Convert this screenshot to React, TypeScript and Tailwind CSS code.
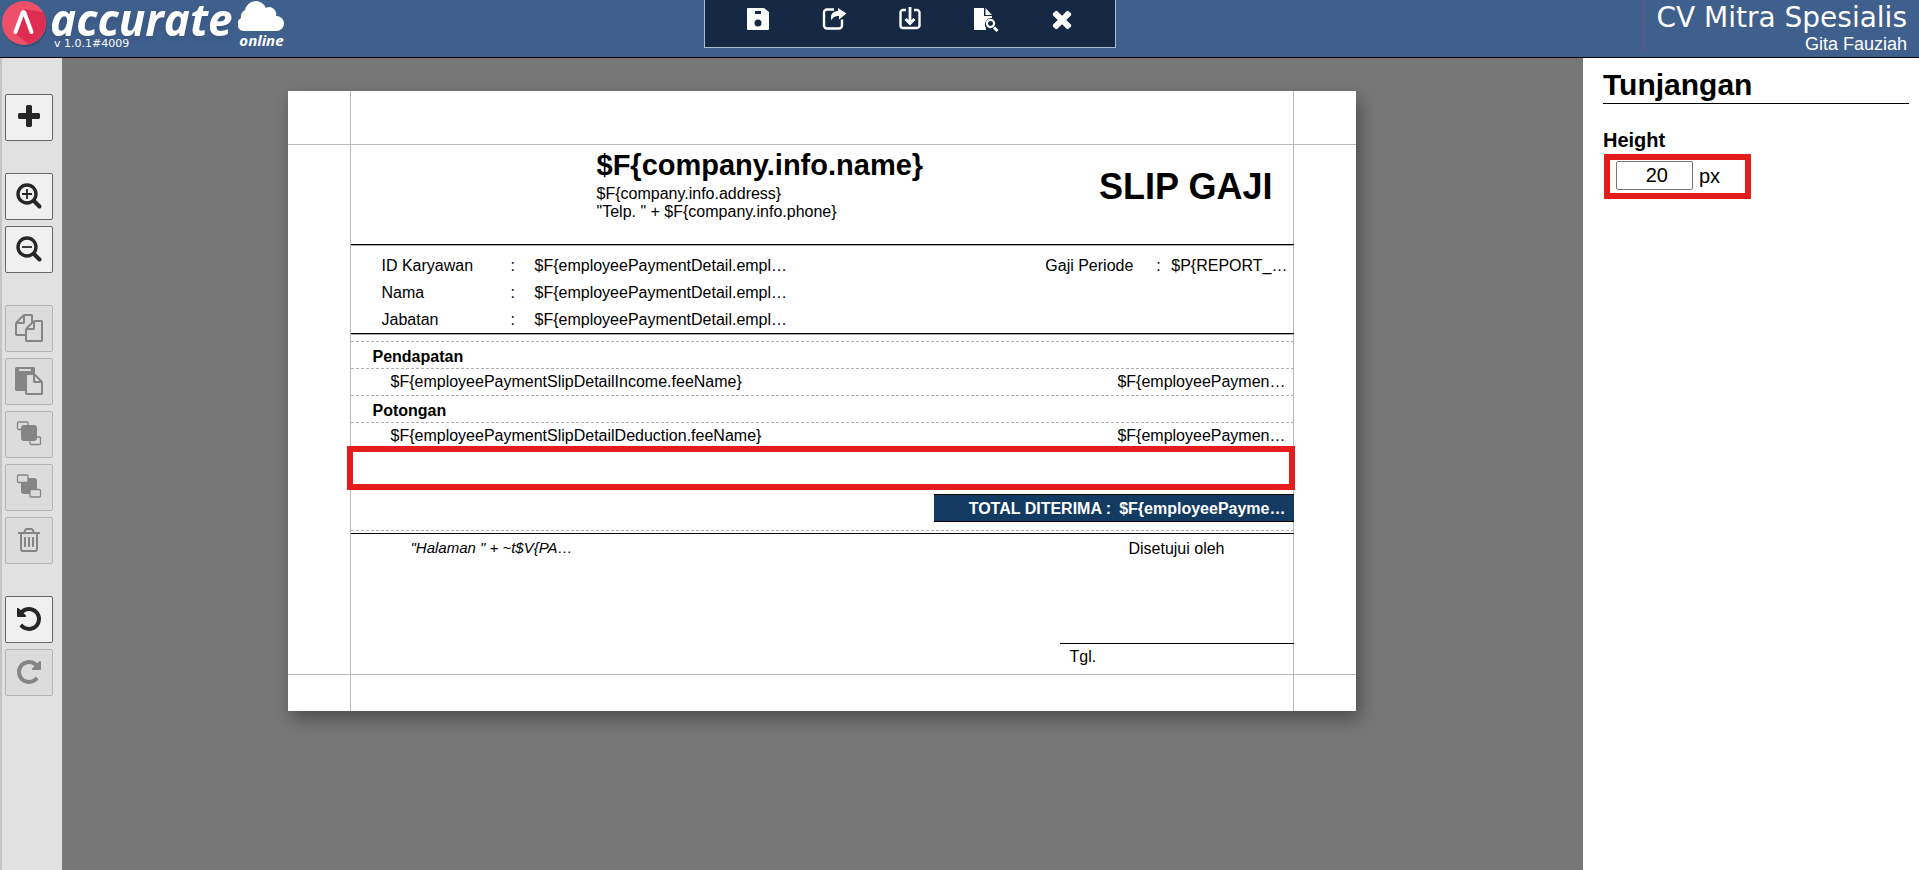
import type { ReactNode } from 'react'

const icons = {
  plus: 'M1600 736v192q0 40-28 68t-68 28h-416v416q0 40-28 68t-68 28h-192q-40 0-68-28t-28-68v-416h-416q-40 0-68-28t-28-68v-192q0-40 28-68t68-28h416v-416q0-40 28-68t68-28h192q40 0 68 28t28 68v416h416q40 0 68 28t28 68z',
  copy: 'M1696 384q40 0 68 28t28 68v1216q0 40-28 68t-68 28h-960q-40 0-68-28t-28-68v-288h-544q-40 0-68-28t-28-68v-672q0-40 20-88t48-76l408-408q28-28 76-48t88-20h416q40 0 68 28t28 68v328q68-40 128-40h416zm-544 213l-299 299h299v-299zm-640-384l-299 299h299v-299zm196 647l316-316v-416h-384v416q0 40-28 68t-68 28h-416v640h512v-256q0-40 20-88t48-76zm956 804v-1152h-384v416q0 40-28 68t-68 28h-416v640h896z',
  paste:
    'M768 1664h896v-640h-416q-40 0-68-28t-28-68v-416h-384v1152zm256-1440v-64q0-13-9.5-22.5t-22.5-9.5h-704q-13 0-22.5 9.5t-9.5 22.5v64q0 13 9.5 22.5t22.5 9.5h704q13 0 22.5-9.5t9.5-22.5zm256 672h299l-299-299v299zm512 128v672q0 40-28 68t-68 28h-960q-40 0-68-28t-28-68v-160h-544q-40 0-68-28t-28-68v-1344q0-40 28-68t68-28h1088q40 0 68 28t28 68v328q21 13 36 28l408 408q28 28 48 76t20 88z',
  trash:
    'M704 736v576q0 14-9 23t-23 9h-64q-14 0-23-9t-9-23v-576q0-14 9-23t23-9h64q14 0 23 9t9 23zm256 0v576q0 14-9 23t-23 9h-64q-14 0-23-9t-9-23v-576q0-14 9-23t23-9h64q14 0 23 9t9 23zm256 0v576q0 14-9 23t-23 9h-64q-14 0-23-9t-9-23v-576q0-14 9-23t23-9h64q14 0 23 9t9 23zm128 724v-948h-896v948q0 22 7 40.5t14.5 27 10.5 8.5h832q3 0 10.5-8.5t14.5-27 7-40.5zm-672-1076h448l-48-117q-7-9-17-11h-317q-10 2-17 11zm928 32v64q0 14-9 23t-23 9h-96v948q0 83-47 143.5t-113 60.5h-832q-66 0-113-58.5t-47-141.5v-952h-96q-14 0-23-9t-9-23v-64q0-14 9-23t23-9h309l70-167q15-37 54-63t79-26h320q40 0 79 26t54 63l70 167h309q14 0 23 9t9 23z',
  undo: 'M1664 896q0 156-61 298t-164 245-245 164-298 61q-172 0-327-72.5t-264-204.5q-7-10-6.5-22.5t8.5-20.5l137-138q10-9 25-9 16 2 23 12 73 95 179 147t225 52q104 0 198.5-40.5t163.5-109.5 109.5-163.5 40.5-198.5-40.5-198.5-109.5-163.5-163.5-109.5-198.5-40.5q-98 0-188 35.5t-160 101.5l137 138q31 30 14 69-17 40-59 40h-448q-26 0-45-19t-19-45v-448q0-42 40-59 39-17 69 14l130 129q107-101 244.5-156.5t284.5-55.5q156 0 298 61t245 164 164 245 61 298z',
  redo: 'M1664 256v448q0 26-19 45t-45 19h-448q-42 0-59-40-17-39 14-69l138-138q-148-137-349-137-104 0-198.5 40.5t-163.5 109.5-109.5 163.5-40.5 198.5 40.5 198.5 109.5 163.5 163.5 109.5 198.5 40.5q119 0 225-52t179-147q7-10 23-12 15 0 25 9l137 138q9 8 9.5 20.5t-7.5 22.5q-109 132-264 204.5t-327 72.5q-156 0-298-61t-245-164-164-245-61-298 61-298 164-245 245-164 298-61q147 0 284.5 55.5t244.5 156.5l130-129q29-31 70-14 39 17 39 59z',
  close:
    'M1490 1322q0 40-28 68l-136 136q-28 28-68 28t-68-28l-294-294-294 294q-28 28-68 28t-68-28l-136-136q-28-28-28-68t28-68l294-294-294-294q-28-28-28-68t28-68l136-136q28-28 68-28t68 28l294 294 294-294q28-28 68-28t68 28l136 136q28 28 28 68t-28 68l-294 294 294 294q28 28 28 68z',
}

function Glyph({ name }: { name: keyof typeof icons }) {
  return (
    <svg viewBox="0 0 1792 1792" className="size-7" fill="currentColor">
      <path d={icons[name]} />
    </svg>
  )
}

function Drawing({ children }: { children: ReactNode }) {
  return (
    <svg viewBox="0 0 28 28" className="size-7" fill="none" stroke="currentColor">
      {children}
    </svg>
  )
}

function ZoomGlyph({ plus }: { plus?: boolean }) {
  return (
    <Drawing>
      <circle cx="12" cy="12" r="9" strokeWidth="3.4" />
      <path d="M19 19l5.500 5.500" strokeWidth="4" strokeLinecap="round" />
      <path d={plus ? 'M7 12h10M12 7v10' : 'M7 12h10'} strokeWidth="1.8" />
    </Drawing>
  )
}

const topTools = [
  {
    label: 'Simpan',
    icon: (
      <Drawing>
        <path
          d="M4 3h16l5 4v17a1 1 0 0 1-1 1H4a1 1 0 0 1-1-1V4a1 1 0 0 1 1-1zm7 3v3h6V6zm3 8.500a3.500 3.500 0 1 0 0 7 3.500 3.500 0 0 0 0-7z"
          fill="currentColor"
          fillRule="evenodd"
          stroke="none"
        />
      </Drawing>
    ),
  },
  {
    label: 'Ekspor',
    icon: (
      <Drawing>
        <path
          d="M14 4.500H7a3 3 0 0 0-3 3v13a3 3 0 0 0 3 3h12a3 3 0 0 0 3-3v-6"
          strokeWidth="2.400"
        />
        <path
          d="M18 3l8.500 5.500-7.500 6v-3.500c-4 0-6 1-7.500 4.500-2-6 1.500-9.500 6.500-9.500z"
          fill="currentColor"
          stroke="none"
        />
      </Drawing>
    ),
  },
  {
    label: 'Impor',
    icon: (
      <Drawing>
        <path
          d="M10 5H7a2.500 2.500 0 0 0-2.500 2.500v13A2.500 2.500 0 0 0 7 23h14a2.500 2.500 0 0 0 2.500-2.500v-13A2.500 2.500 0 0 0 21 5h-3"
          strokeWidth="2.400"
        />
        <path d="M14 2v16M9.500 14l4.500 4.500 4.500-4.500" strokeWidth="2.800" />
      </Drawing>
    ),
  },
  {
    label: 'Pratinjau',
    icon: (
      <Drawing>
        <path
          d="M2 3h10v8h8v2a6.500 6.500 0 0 0-6 10v2H2zM13.500 3l6.500 7h-6.500z"
          fill="currentColor"
          stroke="none"
        />
        <circle cx="18.500" cy="18.500" r="3.600" strokeWidth="2.200" />
        <path d="M22 22.500l3.500 3.500" strokeWidth="3" />
      </Drawing>
    ),
  },
  { label: 'Tutup', icon: <Glyph name="close" /> },
]

const sideTools = [
  [{ label: 'Tambah', icon: <Glyph name="plus" /> }],
  [
    { label: 'Perbesar', icon: <ZoomGlyph plus /> },
    { label: 'Perkecil', icon: <ZoomGlyph /> },
  ],
  [
    { label: 'Salin', icon: <Glyph name="copy" />, disabled: true },
    { label: 'Tempel', icon: <Glyph name="paste" />, disabled: true },
    {
      label: 'Ke depan',
      disabled: true,
      icon: (
        <Drawing>
          <rect x="2.500" y="2" width="10.500" height="7.500" rx="1" strokeWidth="1.300" />
          <rect x="15" y="17" width="10.500" height="7.500" rx="1" strokeWidth="1.300" />
          <rect x="6.500" y="5.500" width="15" height="15" rx="2" fill="currentColor" />
        </Drawing>
      ),
    },
    {
      label: 'Ke belakang',
      disabled: true,
      icon: (
        <Drawing>
          <rect x="6.500" y="5.500" width="15" height="15" rx="2" fill="currentColor" />
          <g fill="#dcdcdc" strokeWidth="1.300">
            <rect x="2.500" y="2" width="10.500" height="7.500" rx="1" />
            <rect x="15" y="16.500" width="10.500" height="7.500" rx="1" />
          </g>
        </Drawing>
      ),
    },
    { label: 'Hapus', icon: <Glyph name="trash" />, disabled: true },
  ],
  [
    { label: 'Urungkan', icon: <Glyph name="undo" /> },
    { label: 'Ulangi', icon: <Glyph name="redo" />, disabled: true },
  ],
]

const employee = [
  { label: 'ID Karyawan', value: '$F{employeePaymentDetail.empl…' },
  { label: 'Nama', value: '$F{employeePaymentDetail.empl…' },
  { label: 'Jabatan', value: '$F{employeePaymentDetail.empl…' },
]

const bands = [
  { title: 'Pendapatan', field: '$F{employeePaymentSlipDetailIncome.feeName}' },
  { title: 'Potongan', field: '$F{employeePaymentSlipDetailDeduction.feeName}' },
]

export default function App() {
  return (
    <div className="flex min-h-screen flex-col bg-[#777] font-['Liberation_Sans',Arial,sans-serif] text-black">
      <Header />
      <div className="flex grow">
        <SideBar />
        <main className="flex grow justify-center pt-[33px] pr-0.5">
          <Sheet />
        </main>
        <PropertyPanel />
      </div>
    </div>
  )
}

function Header() {
  return (
    <header className="grid h-[58px] grid-cols-[704fr_412px_803fr] items-start border-b border-black bg-[#3f5f8d] text-white">
      <Logo />
      <nav className="flex h-12 items-start justify-center gap-12 border border-t-0 border-[#a9bccb] bg-[#152945] pt-[5px]">
        {topTools.map((tool) => (
          <button key={tool.label} aria-label={tool.label}>
            {tool.icon}
          </button>
        ))}
      </nav>
      <div className="justify-self-end border-l border-[#7d4a7c] pr-3 pl-3 text-right">
        <div className="font-['DejaVu_Sans',Verdana,sans-serif] text-[28px] leading-9">
          CV Mitra Spesialis
        </div>
        <div className="text-lg leading-4">Gita Fauziah</div>
      </div>
    </header>
  )
}

function Logo() {
  return (
    <div className="flex items-start">
      <svg viewBox="0 0 50 50" className="size-[50px]">
        <circle cx="25" cy="25" r="22" fill="#22395c" opacity=".4" />
        <circle cx="24" cy="23" r="22" fill="#ee5069" />
        <path d="M24 9l19 3a22 22 0 0 1-14 32L14 33z" fill="#dd2d50" />
        <path
          d="M15.500 32l7-19q1-2 2 0l7 19"
          fill="none"
          stroke="#fff"
          strokeWidth="4"
          strokeLinecap="round"
        />
      </svg>
      <div>
        <div className="font-['Open_Sans',sans-serif] text-[44px] leading-[38px] font-bold italic drop-shadow-md">
          accurate
        </div>
        <div className="pl-1 font-['DejaVu_Sans',Verdana,sans-serif] text-[11px] leading-3">
          v 1.0.1#4009
        </div>
      </div>
      <div className="ml-1.5 flex flex-col items-center">
        <svg viewBox="0 0 46 32" className="h-8 w-[46px]" fill="#fff">
          <path d="M7 31a7 7 0 0 1-4-13 8 8 0 0 1 4-8 11 11 0 0 1 21-2 7 7 0 0 1 10 8 7.500 7.500 0 0 1 1 15z" />
        </svg>
        <div className="font-['Open_Sans',sans-serif] text-[15px] leading-4 font-bold italic">
          online
        </div>
      </div>
    </div>
  )
}

function SideBar() {
  return (
    <aside className="flex w-[62px] shrink-0 flex-col gap-8 border-l-2 border-[#c4c4c4] bg-[#e1e1e1] pt-9 pl-[3px]">
      {sideTools.map((group) => (
        <div key={group[0].label} className="flex flex-col gap-[6px]">
          {group.map((tool) => (
            <button
              key={tool.label}
              aria-label={tool.label}
              disabled={'disabled' in tool}
              className="flex h-[47px] w-12 items-center justify-center rounded-xs border border-[#666] bg-[#f0f0f0] pb-0.5 text-[#262626] disabled:border-[#b4b4b4] disabled:bg-[#dcdcdc] disabled:text-[#858585]"
            >
              {tool.icon}
            </button>
          ))}
        </div>
      ))}
    </aside>
  )
}

function Sheet() {
  return (
    <section className="relative h-[620px] w-[1068px] bg-white pt-[54px] pr-[62px] pl-[63px] text-base leading-[18px] shadow-[4px_8px_16px_rgba(0,0,0,0.35)]">
      {/* page margins */}
      <div className="absolute inset-x-0 top-[53px] bottom-[36px] border-y border-[#bbb]" />
      <div className="absolute inset-y-0 right-[62px] left-[62px] border-x border-[#bbb]" />

      <div className="relative">
        <div className="flex h-[100px] items-start justify-between border-b border-black pt-0.5 pr-[21px] pl-[246px] shadow-[0_1px_#aaa]">
          <div>
            <h1 className="mb-0.5 text-[29px] leading-9 font-bold">{'$F{company.info.name}'}</h1>
            <p>{'$F{company.info.address}'}</p>
            <p>{'"Telp. " + $F{company.info.phone}'}</p>
          </div>
          <h2 className="pt-5 text-4xl leading-10 font-bold">SLIP GAJI</h2>
        </div>

        <div className="flex justify-between border-b border-black pt-[7px] pr-[6px] pl-[31px] leading-[27px] shadow-[0_1px_#aaa]">
          <dl>
            {employee.map((row) => (
              <div key={row.label} className="flex">
                <dt className="w-[129px]">{row.label}</dt>
                <dd className="flex">
                  <span className="w-6">:</span>
                  {row.value}
                </dd>
              </div>
            ))}
          </dl>
          <dl className="flex">
            <dt className="w-[111px]">Gaji Periode</dt>
            <dd className="flex">
              <span className="w-[15px]">:</span>
              {'$P{REPORT_…'}
            </dd>
          </dl>
        </div>

        <div className="pt-[7px]">
          {bands.map((band) => (
            <div key={band.title}>
              <h3 className="h-[27px] border-t border-dashed border-[#b0b0b0] pt-[6px] pl-[22px] font-bold">
                {band.title}
              </h3>
              <div className="flex h-[27px] justify-between border-t border-dashed border-[#b0b0b0] pt-1 pr-2 pl-10">
                <span>{band.field}</span>
                <span>{'$F{employeePaymen…'}</span>
              </div>
            </div>
          ))}
        </div>

        {/* selected band */}
        <div className="relative h-[45px]">
          <div className="absolute -top-[3px] -right-px -left-1 h-[44px] border-6 border-[#e51c1c] bg-white" />
        </div>

        <div className="ml-auto flex h-7 w-[360px] items-center justify-end gap-2 border-y border-black bg-[#133a60] pt-0.5 pr-2 font-bold text-white">
          <span>TOTAL DITERIMA :</span>
          <span>{'$F{employeePayme…'}</span>
        </div>

        <div className="mt-2 h-[3px] border-t border-dashed border-[#b0b0b0]" />
        <div className="flex justify-between border-t border-black pt-[6px] pr-[69px] pl-[60px]">
          <em className="text-[15px] leading-4">{'"Halaman " + ~t$V{PA…'}</em>
          <span>Disetujui oleh</span>
        </div>
        <div className="mt-[85px] ml-auto w-[234px] border-t border-black pt-1 pl-[10px]">Tgl.</div>
      </div>
    </section>
  )
}

function PropertyPanel() {
  return (
    <aside className="w-[336px] shrink-0 bg-white pt-[11px] pr-[10px] pl-[20px]">
      <h2 className="border-b border-black pb-0.5 text-[30px] leading-8 font-bold">Tunjangan</h2>
      <label htmlFor="height" className="mt-[23px] mb-px block text-xl leading-[26px] font-bold">
        Height
      </label>
      <div className="ml-px flex h-[45px] w-[147px] items-center gap-[6px] border-6 border-[#e51c1c] pb-0.5 pl-[6px] text-xl">
        <input
          id="height"
          defaultValue="20"
          className="h-[29px] w-[77px] rounded-xs border border-[#767676] pr-6 text-right"
        />
        <span>px</span>
      </div>
    </aside>
  )
}
